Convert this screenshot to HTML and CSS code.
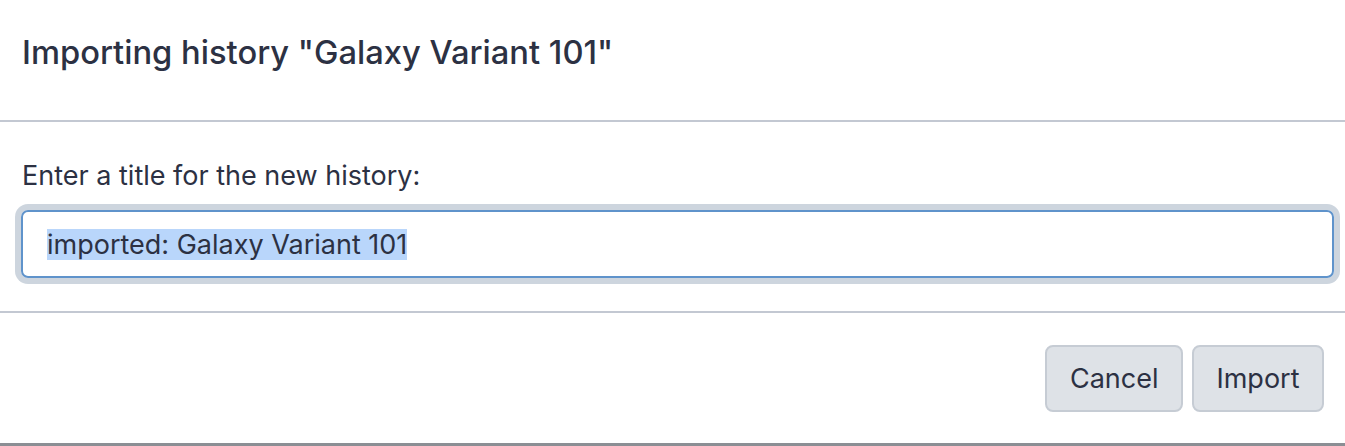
FILE: index.html
```html
<!DOCTYPE html>
<html lang="en">
<head>
<meta charset="utf-8">
<title>Import history</title>
<link rel="stylesheet" href="styles.css">
</head>
<body>
<div class="modal">
  <header class="modal-header">
    <h1 class="modal-title">Importing history "Galaxy Variant 101"</h1>
  </header>
  <section class="modal-body">
    <label class="field-label">Enter a title for the new history:</label>
    <div class="field-wrap">
      <div class="field-input" role="textbox"><span class="selected">imported: Galaxy Variant 101</span></div>
    </div>
  </section>
  <footer class="modal-footer">
    <button class="btn">Cancel</button>
    <button class="btn">Import</button>
  </footer>
</div>
</body>
</html>
```
FILE: styles.css
```css
html, body {
  margin: 0;
  padding: 0;
  background: #ffffff;
}
body {
  font-family: Inter, "Liberation Sans", sans-serif;
  color: #2c3143;
}
.modal {
  width: 1345px;
  height: 446px;
  box-sizing: border-box;
  border-bottom: 3px solid #8b8e94;
  display: flex;
  flex-direction: column;
}
.modal-header {
  height: 122px;
  flex: none;
  box-sizing: border-box;
  border-bottom: 2px solid #c3c8d2;
  padding: 32px 22px 0 22px;
}
.modal-title {
  margin: 0;
  font-size: 32.7px;
  font-weight: 500;
  line-height: 40px;
}
.modal-body {
  height: 191px;
  flex: none;
  box-sizing: border-box;
  border-bottom: 2px solid #c3c8d2;
  padding: 36px 11px 0 21px;
  display: flex;
  flex-direction: column;
}
.field-label {
  font-size: 27px;
  line-height: 36px;
  padding-left: 1px;
  margin-bottom: 16px;
}
.field-wrap {
  display: flex;
}
.field-input {
  flex: 1;
  height: 68px;
  box-sizing: border-box;
  border: 2px solid #5f93cb;
  border-radius: 7px;
  box-shadow: 0 0 0 6px #cdd5de;
  padding: 0 24px;
  display: flex;
  align-items: center;
  font-size: 27px;
}
.selected {
  background: #b9d6fb;
  line-height: 31px;
}
.modal-footer {
  flex: 1;
  display: flex;
  justify-content: flex-end;
  align-items: center;
  gap: 9px;
  padding: 0 21px;
}
.btn {
  font-family: inherit;
  font-size: 27px;
  color: #2c3143;
  background: #dee2e7;
  border: 2px solid #c6ccd4;
  border-radius: 8px;
  height: 67px;
  padding: 0 22.5px;
}
```
